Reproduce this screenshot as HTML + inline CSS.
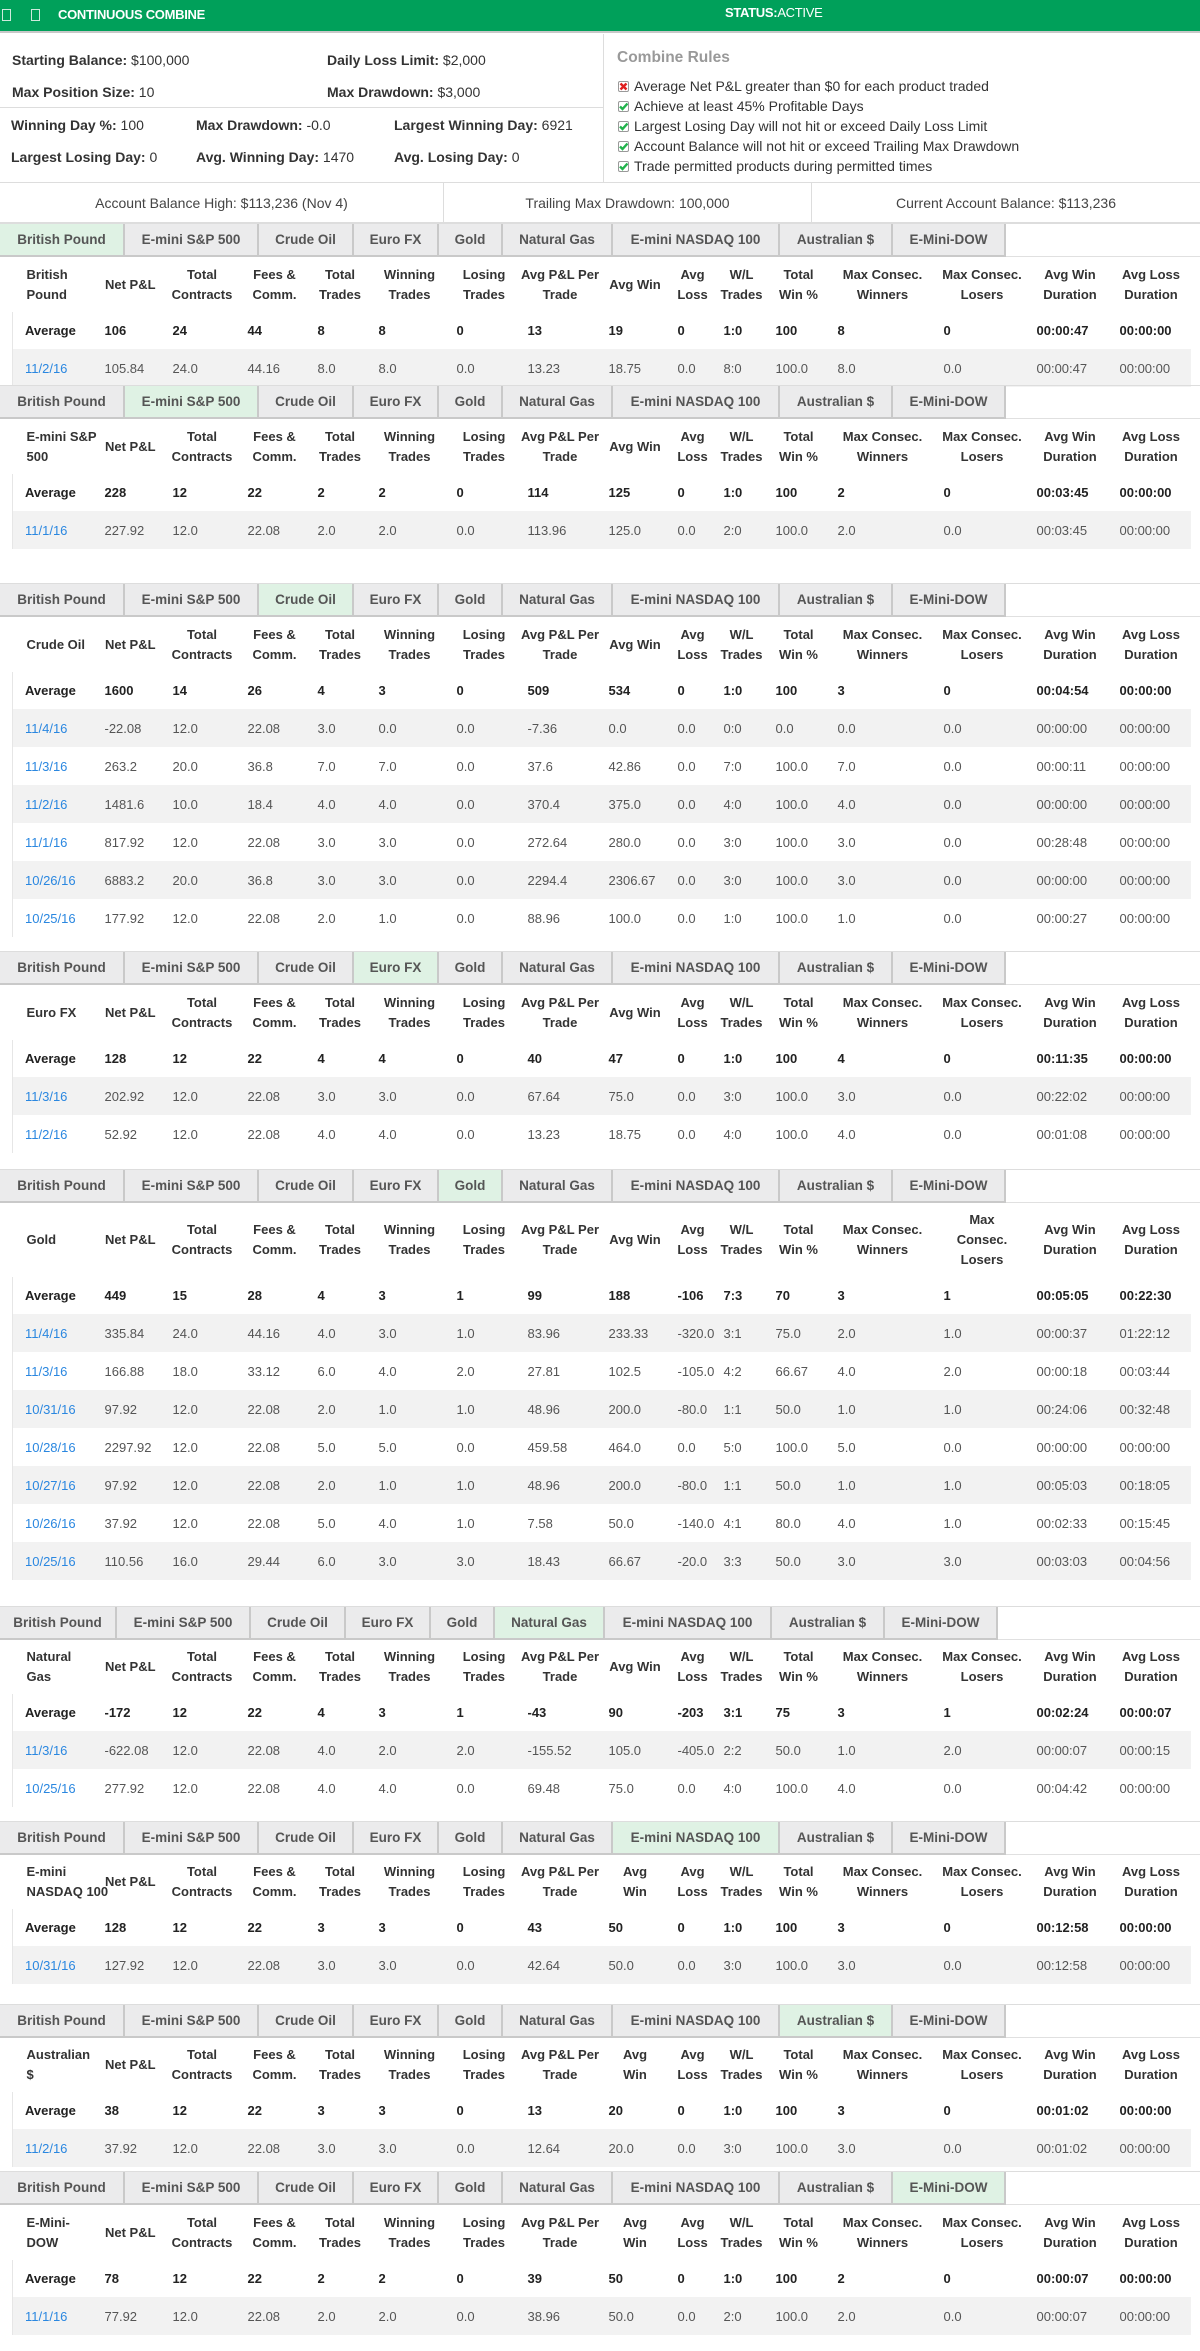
<!DOCTYPE html>
<html><head><meta charset="utf-8">
<style>
*{box-sizing:border-box;margin:0;padding:0}
body{width:1200px;height:2351px;position:relative;background:#fff;font-family:"Liberation Sans",Arial,sans-serif;color:#333;overflow:hidden}
.hdr{position:absolute;left:0;top:0;width:1200px;height:33px;background:#00a05a;border-bottom:2px solid #c8c8c8}
.hdr .ic{position:absolute;top:9px;width:9px;height:12px;border:1px solid #cfe9dc}
.hdr .t{position:absolute;top:7px;color:#fff;font-weight:bold;font-size:13px;letter-spacing:-0.3px}
.info{position:absolute;font-size:14px;color:#333}
.info b{color:#333}
.ln{position:absolute;height:1px;background:#ddd}
.rules{position:absolute;left:603px;top:34px;width:597px;height:148px;border-left:1px solid #ddd}
.rules h3{position:absolute;left:13px;top:15px;font-size:15.5px;color:#999;font-weight:bold}
.rule{position:absolute;left:14px;font-size:14px;color:#333;height:20px;line-height:20px;white-space:nowrap}
.cb{display:inline-block;width:11px;height:11px;border:1px solid #999;border-radius:2px;vertical-align:-1px;margin-right:5px;position:relative;background:#fff}
.bal{position:absolute;top:182px;height:41px;border-top:1px solid #ddd;border-bottom:1px solid #ddd;text-align:center;line-height:40px;font-size:14px;color:#444}
.sec{position:absolute;left:0;width:1200px}
.tabs{height:34px;display:flex;border-top:1px solid #ddd}
.tab{height:33px;background:#ebebec;border-right:2px solid #c9c9c9;border-bottom:2px solid #c9c9c9;font-weight:bold;font-size:13.5px;color:#555;text-align:center;line-height:31px;white-space:nowrap}
.tab.a{background:#dff2e4}
.tabs .rest{flex:1;border-bottom:1px solid #e0e0e0;height:33px}
table{border-collapse:collapse;margin-left:12px;width:1178px;table-layout:fixed}
th{font-size:13px;font-weight:bold;color:#333;text-align:center;line-height:20px;padding:0 1px;white-space:nowrap;vertical-align:middle}
th:first-child{text-align:left;padding-left:14px}
td{font-size:13px;padding-left:8px;white-space:nowrap;color:#555;height:38px}
tr.av td{font-weight:bold;color:#222;height:37px}
tr.g td{background:#f2f2f2}
td:first-child{border-left:1px solid #e6e6e6;padding-left:12px}
td a{color:#2a87e0;text-decoration:none}
</style></head><body>
<div class="hdr"><span class="ic" style="left:2px"></span><span class="ic" style="left:31px"></span><span class="t" style="left:58px">CONTINUOUS COMBINE</span><span class="t" style="left:725px;top:5px">STATUS:<span style="font-weight:normal">ACTIVE</span></span></div>

<div class="info" style="left:12px;top:52px"><b>Starting Balance:</b> $100,000</div>
<div class="info" style="left:327px;top:52px"><b>Daily Loss Limit:</b> $2,000</div>
<div class="info" style="left:12px;top:84px"><b>Max Position Size:</b> 10</div>
<div class="info" style="left:327px;top:84px"><b>Max Drawdown:</b> $3,000</div>
<div class="ln" style="left:0;top:107px;width:603px"></div>
<div class="info" style="left:11px;top:117px"><b>Winning Day %:</b> 100</div>
<div class="info" style="left:196px;top:117px"><b>Max Drawdown:</b> -0.0</div>
<div class="info" style="left:394px;top:117px"><b>Largest Winning Day:</b> 6921</div>
<div class="info" style="left:11px;top:149px"><b>Largest Losing Day:</b> 0</div>
<div class="info" style="left:196px;top:149px"><b>Avg. Winning Day:</b> 1470</div>
<div class="info" style="left:394px;top:149px"><b>Avg. Losing Day:</b> 0</div>

<div class="rules"><h3>Combine Rules</h3>
<div class="rule" style="top:42px"><span class="cb"><svg width="9" height="9" style="position:absolute;left:0;top:0"><path d="M1.5 1.5L7.5 7.5M7.5 1.5L1.5 7.5" stroke="#e02020" stroke-width="2.4"/></svg></span>Average Net P&amp;L greater than $0 for each product traded</div>
<div class="rule" style="top:62px"><span class="cb"><svg width="9" height="9" style="position:absolute;left:0;top:0"><path d="M1 4.5L3.5 7L8.5 1.5" stroke="#22b24c" stroke-width="2.4" fill="none"/></svg></span>Achieve at least 45% Profitable Days</div>
<div class="rule" style="top:82px"><span class="cb"><svg width="9" height="9" style="position:absolute;left:0;top:0"><path d="M1 4.5L3.5 7L8.5 1.5" stroke="#22b24c" stroke-width="2.4" fill="none"/></svg></span>Largest Losing Day will not hit or exceed Daily Loss Limit</div>
<div class="rule" style="top:102px"><span class="cb"><svg width="9" height="9" style="position:absolute;left:0;top:0"><path d="M1 4.5L3.5 7L8.5 1.5" stroke="#22b24c" stroke-width="2.4" fill="none"/></svg></span>Account Balance will not hit or exceed Trailing Max Drawdown</div>
<div class="rule" style="top:122px"><span class="cb"><svg width="9" height="9" style="position:absolute;left:0;top:0"><path d="M1 4.5L3.5 7L8.5 1.5" stroke="#22b24c" stroke-width="2.4" fill="none"/></svg></span>Trade permitted products during permitted times</div>
</div>

<div class="bal" style="left:0;width:443px">Account Balance High: $113,236 (Nov 4)</div>
<div class="bal" style="left:443px;width:368px;border-left:1px solid #ddd">Trailing Max Drawdown: 100,000</div>
<div class="bal" style="left:811px;width:389px;border-left:1px solid #ddd">Current Account Balance: $113,236</div>

<!-- SECTION 1 -->
<div class="sec" style="top:223px">
<div class="tabs"><div class="tab a" style="width:125px">British Pound</div><div class="tab" style="width:134px">E-mini S&amp;P 500</div><div class="tab" style="width:95px">Crude Oil</div><div class="tab" style="width:85px">Euro FX</div><div class="tab" style="width:64px">Gold</div><div class="tab" style="width:110px">Natural Gas</div><div class="tab" style="width:167px">E-mini NASDAQ 100</div><div class="tab" style="width:113px">Australian $</div><div class="tab" style="width:113px">E-Mini-DOW</div><div class="rest"></div></div>
<table><colgroup><col style="width:84px"><col style="width:68px"><col style="width:75px"><col style="width:70px"><col style="width:61px"><col style="width:78px"><col style="width:71px"><col style="width:81px"><col style="width:69px"><col style="width:46px"><col style="width:52px"><col style="width:62px"><col style="width:106px"><col style="width:93px"><col style="width:83px"><col style="width:79px"></colgroup>
<tr style="height:55px"><th>British<br>Pound</th><th>Net P&amp;L</th><th>Total<br>Contracts</th><th>Fees &amp;<br>Comm.</th><th>Total<br>Trades</th><th>Winning<br>Trades</th><th>Losing<br>Trades</th><th>Avg P&amp;L Per<br>Trade</th><th>Avg Win</th><th>Avg<br>Loss</th><th>W/L<br>Trades</th><th>Total<br>Win %</th><th>Max Consec.<br>Winners</th><th>Max Consec.<br>Losers</th><th>Avg Win<br>Duration</th><th>Avg Loss<br>Duration</th></tr>
<tr class="av"><td>Average</td><td>106</td><td>24</td><td>44</td><td>8</td><td>8</td><td>0</td><td>13</td><td>19</td><td>0</td><td>1:0</td><td>100</td><td>8</td><td>0</td><td>00:00:47</td><td>00:00:00</td></tr>
<tr class="g"><td><a>11/2/16</a></td><td>105.84</td><td>24.0</td><td>44.16</td><td>8.0</td><td>8.0</td><td>0.0</td><td>13.23</td><td>18.75</td><td>0.0</td><td>8:0</td><td>100.0</td><td>8.0</td><td>0.0</td><td>00:00:47</td><td>00:00:00</td></tr>
</table></div>

<!-- SECTION 2 -->
<div class="sec" style="top:385px">
<div class="tabs"><div class="tab" style="width:125px">British Pound</div><div class="tab a" style="width:134px">E-mini S&amp;P 500</div><div class="tab" style="width:95px">Crude Oil</div><div class="tab" style="width:85px">Euro FX</div><div class="tab" style="width:64px">Gold</div><div class="tab" style="width:110px">Natural Gas</div><div class="tab" style="width:167px">E-mini NASDAQ 100</div><div class="tab" style="width:113px">Australian $</div><div class="tab" style="width:113px">E-Mini-DOW</div><div class="rest"></div></div>
<table><colgroup><col style="width:84px"><col style="width:68px"><col style="width:75px"><col style="width:70px"><col style="width:61px"><col style="width:78px"><col style="width:71px"><col style="width:81px"><col style="width:69px"><col style="width:46px"><col style="width:52px"><col style="width:62px"><col style="width:106px"><col style="width:93px"><col style="width:83px"><col style="width:79px"></colgroup>
<tr style="height:55px"><th>E-mini S&amp;P<br>500</th><th>Net P&amp;L</th><th>Total<br>Contracts</th><th>Fees &amp;<br>Comm.</th><th>Total<br>Trades</th><th>Winning<br>Trades</th><th>Losing<br>Trades</th><th>Avg P&amp;L Per<br>Trade</th><th>Avg Win</th><th>Avg<br>Loss</th><th>W/L<br>Trades</th><th>Total<br>Win %</th><th>Max Consec.<br>Winners</th><th>Max Consec.<br>Losers</th><th>Avg Win<br>Duration</th><th>Avg Loss<br>Duration</th></tr>
<tr class="av"><td>Average</td><td>228</td><td>12</td><td>22</td><td>2</td><td>2</td><td>0</td><td>114</td><td>125</td><td>0</td><td>1:0</td><td>100</td><td>2</td><td>0</td><td>00:03:45</td><td>00:00:00</td></tr>
<tr class="g"><td><a>11/1/16</a></td><td>227.92</td><td>12.0</td><td>22.08</td><td>2.0</td><td>2.0</td><td>0.0</td><td>113.96</td><td>125.0</td><td>0.0</td><td>2:0</td><td>100.0</td><td>2.0</td><td>0.0</td><td>00:03:45</td><td>00:00:00</td></tr>
</table></div>

<!-- SECTION 3 -->
<div class="sec" style="top:583px">
<div class="tabs"><div class="tab" style="width:125px">British Pound</div><div class="tab" style="width:134px">E-mini S&amp;P 500</div><div class="tab a" style="width:95px">Crude Oil</div><div class="tab" style="width:85px">Euro FX</div><div class="tab" style="width:64px">Gold</div><div class="tab" style="width:110px">Natural Gas</div><div class="tab" style="width:167px">E-mini NASDAQ 100</div><div class="tab" style="width:113px">Australian $</div><div class="tab" style="width:113px">E-Mini-DOW</div><div class="rest"></div></div>
<table><colgroup><col style="width:84px"><col style="width:68px"><col style="width:75px"><col style="width:70px"><col style="width:61px"><col style="width:78px"><col style="width:71px"><col style="width:81px"><col style="width:69px"><col style="width:46px"><col style="width:52px"><col style="width:62px"><col style="width:106px"><col style="width:93px"><col style="width:83px"><col style="width:79px"></colgroup>
<tr style="height:55px"><th>Crude Oil</th><th>Net P&amp;L</th><th>Total<br>Contracts</th><th>Fees &amp;<br>Comm.</th><th>Total<br>Trades</th><th>Winning<br>Trades</th><th>Losing<br>Trades</th><th>Avg P&amp;L Per<br>Trade</th><th>Avg Win</th><th>Avg<br>Loss</th><th>W/L<br>Trades</th><th>Total<br>Win %</th><th>Max Consec.<br>Winners</th><th>Max Consec.<br>Losers</th><th>Avg Win<br>Duration</th><th>Avg Loss<br>Duration</th></tr>
<tr class="av"><td>Average</td><td>1600</td><td>14</td><td>26</td><td>4</td><td>3</td><td>0</td><td>509</td><td>534</td><td>0</td><td>1:0</td><td>100</td><td>3</td><td>0</td><td>00:04:54</td><td>00:00:00</td></tr>
<tr class="g"><td><a>11/4/16</a></td><td>-22.08</td><td>12.0</td><td>22.08</td><td>3.0</td><td>0.0</td><td>0.0</td><td>-7.36</td><td>0.0</td><td>0.0</td><td>0:0</td><td>0.0</td><td>0.0</td><td>0.0</td><td>00:00:00</td><td>00:00:00</td></tr>
<tr><td><a>11/3/16</a></td><td>263.2</td><td>20.0</td><td>36.8</td><td>7.0</td><td>7.0</td><td>0.0</td><td>37.6</td><td>42.86</td><td>0.0</td><td>7:0</td><td>100.0</td><td>7.0</td><td>0.0</td><td>00:00:11</td><td>00:00:00</td></tr>
<tr class="g"><td><a>11/2/16</a></td><td>1481.6</td><td>10.0</td><td>18.4</td><td>4.0</td><td>4.0</td><td>0.0</td><td>370.4</td><td>375.0</td><td>0.0</td><td>4:0</td><td>100.0</td><td>4.0</td><td>0.0</td><td>00:00:00</td><td>00:00:00</td></tr>
<tr><td><a>11/1/16</a></td><td>817.92</td><td>12.0</td><td>22.08</td><td>3.0</td><td>3.0</td><td>0.0</td><td>272.64</td><td>280.0</td><td>0.0</td><td>3:0</td><td>100.0</td><td>3.0</td><td>0.0</td><td>00:28:48</td><td>00:00:00</td></tr>
<tr class="g"><td><a>10/26/16</a></td><td>6883.2</td><td>20.0</td><td>36.8</td><td>3.0</td><td>3.0</td><td>0.0</td><td>2294.4</td><td>2306.67</td><td>0.0</td><td>3:0</td><td>100.0</td><td>3.0</td><td>0.0</td><td>00:00:00</td><td>00:00:00</td></tr>
<tr><td><a>10/25/16</a></td><td>177.92</td><td>12.0</td><td>22.08</td><td>2.0</td><td>1.0</td><td>0.0</td><td>88.96</td><td>100.0</td><td>0.0</td><td>1:0</td><td>100.0</td><td>1.0</td><td>0.0</td><td>00:00:27</td><td>00:00:00</td></tr>
</table></div>

<!-- SECTION 4 -->
<div class="sec" style="top:951px">
<div class="tabs"><div class="tab" style="width:125px">British Pound</div><div class="tab" style="width:134px">E-mini S&amp;P 500</div><div class="tab" style="width:95px">Crude Oil</div><div class="tab a" style="width:85px">Euro FX</div><div class="tab" style="width:64px">Gold</div><div class="tab" style="width:110px">Natural Gas</div><div class="tab" style="width:167px">E-mini NASDAQ 100</div><div class="tab" style="width:113px">Australian $</div><div class="tab" style="width:113px">E-Mini-DOW</div><div class="rest"></div></div>
<table><colgroup><col style="width:84px"><col style="width:68px"><col style="width:75px"><col style="width:70px"><col style="width:61px"><col style="width:78px"><col style="width:71px"><col style="width:81px"><col style="width:69px"><col style="width:46px"><col style="width:52px"><col style="width:62px"><col style="width:106px"><col style="width:93px"><col style="width:83px"><col style="width:79px"></colgroup>
<tr style="height:55px"><th>Euro FX</th><th>Net P&amp;L</th><th>Total<br>Contracts</th><th>Fees &amp;<br>Comm.</th><th>Total<br>Trades</th><th>Winning<br>Trades</th><th>Losing<br>Trades</th><th>Avg P&amp;L Per<br>Trade</th><th>Avg Win</th><th>Avg<br>Loss</th><th>W/L<br>Trades</th><th>Total<br>Win %</th><th>Max Consec.<br>Winners</th><th>Max Consec.<br>Losers</th><th>Avg Win<br>Duration</th><th>Avg Loss<br>Duration</th></tr>
<tr class="av"><td>Average</td><td>128</td><td>12</td><td>22</td><td>4</td><td>4</td><td>0</td><td>40</td><td>47</td><td>0</td><td>1:0</td><td>100</td><td>4</td><td>0</td><td>00:11:35</td><td>00:00:00</td></tr>
<tr class="g"><td><a>11/3/16</a></td><td>202.92</td><td>12.0</td><td>22.08</td><td>3.0</td><td>3.0</td><td>0.0</td><td>67.64</td><td>75.0</td><td>0.0</td><td>3:0</td><td>100.0</td><td>3.0</td><td>0.0</td><td>00:22:02</td><td>00:00:00</td></tr>
<tr><td><a>11/2/16</a></td><td>52.92</td><td>12.0</td><td>22.08</td><td>4.0</td><td>4.0</td><td>0.0</td><td>13.23</td><td>18.75</td><td>0.0</td><td>4:0</td><td>100.0</td><td>4.0</td><td>0.0</td><td>00:01:08</td><td>00:00:00</td></tr>
</table></div>

<!-- SECTION 5 -->
<div class="sec" style="top:1169px">
<div class="tabs"><div class="tab" style="width:125px">British Pound</div><div class="tab" style="width:134px">E-mini S&amp;P 500</div><div class="tab" style="width:95px">Crude Oil</div><div class="tab" style="width:85px">Euro FX</div><div class="tab a" style="width:64px">Gold</div><div class="tab" style="width:110px">Natural Gas</div><div class="tab" style="width:167px">E-mini NASDAQ 100</div><div class="tab" style="width:113px">Australian $</div><div class="tab" style="width:113px">E-Mini-DOW</div><div class="rest"></div></div>
<table><colgroup><col style="width:84px"><col style="width:68px"><col style="width:75px"><col style="width:70px"><col style="width:61px"><col style="width:78px"><col style="width:71px"><col style="width:81px"><col style="width:69px"><col style="width:46px"><col style="width:52px"><col style="width:62px"><col style="width:106px"><col style="width:93px"><col style="width:83px"><col style="width:79px"></colgroup>
<tr style="height:74px"><th>Gold</th><th>Net P&amp;L</th><th>Total<br>Contracts</th><th>Fees &amp;<br>Comm.</th><th>Total<br>Trades</th><th>Winning<br>Trades</th><th>Losing<br>Trades</th><th>Avg P&amp;L Per<br>Trade</th><th>Avg Win</th><th>Avg<br>Loss</th><th>W/L<br>Trades</th><th>Total<br>Win %</th><th>Max Consec.<br>Winners</th><th>Max<br>Consec.<br>Losers</th><th>Avg Win<br>Duration</th><th>Avg Loss<br>Duration</th></tr>
<tr class="av"><td>Average</td><td>449</td><td>15</td><td>28</td><td>4</td><td>3</td><td>1</td><td>99</td><td>188</td><td>-106</td><td>7:3</td><td>70</td><td>3</td><td>1</td><td>00:05:05</td><td>00:22:30</td></tr>
<tr class="g"><td><a>11/4/16</a></td><td>335.84</td><td>24.0</td><td>44.16</td><td>4.0</td><td>3.0</td><td>1.0</td><td>83.96</td><td>233.33</td><td>-320.0</td><td>3:1</td><td>75.0</td><td>2.0</td><td>1.0</td><td>00:00:37</td><td>01:22:12</td></tr>
<tr><td><a>11/3/16</a></td><td>166.88</td><td>18.0</td><td>33.12</td><td>6.0</td><td>4.0</td><td>2.0</td><td>27.81</td><td>102.5</td><td>-105.0</td><td>4:2</td><td>66.67</td><td>4.0</td><td>2.0</td><td>00:00:18</td><td>00:03:44</td></tr>
<tr class="g"><td><a>10/31/16</a></td><td>97.92</td><td>12.0</td><td>22.08</td><td>2.0</td><td>1.0</td><td>1.0</td><td>48.96</td><td>200.0</td><td>-80.0</td><td>1:1</td><td>50.0</td><td>1.0</td><td>1.0</td><td>00:24:06</td><td>00:32:48</td></tr>
<tr><td><a>10/28/16</a></td><td>2297.92</td><td>12.0</td><td>22.08</td><td>5.0</td><td>5.0</td><td>0.0</td><td>459.58</td><td>464.0</td><td>0.0</td><td>5:0</td><td>100.0</td><td>5.0</td><td>0.0</td><td>00:00:00</td><td>00:00:00</td></tr>
<tr class="g"><td><a>10/27/16</a></td><td>97.92</td><td>12.0</td><td>22.08</td><td>2.0</td><td>1.0</td><td>1.0</td><td>48.96</td><td>200.0</td><td>-80.0</td><td>1:1</td><td>50.0</td><td>1.0</td><td>1.0</td><td>00:05:03</td><td>00:18:05</td></tr>
<tr><td><a>10/26/16</a></td><td>37.92</td><td>12.0</td><td>22.08</td><td>5.0</td><td>4.0</td><td>1.0</td><td>7.58</td><td>50.0</td><td>-140.0</td><td>4:1</td><td>80.0</td><td>4.0</td><td>1.0</td><td>00:02:33</td><td>00:15:45</td></tr>
<tr class="g"><td><a>10/25/16</a></td><td>110.56</td><td>16.0</td><td>29.44</td><td>6.0</td><td>3.0</td><td>3.0</td><td>18.43</td><td>66.67</td><td>-20.0</td><td>3:3</td><td>50.0</td><td>3.0</td><td>3.0</td><td>00:03:03</td><td>00:04:56</td></tr>
</table></div>

<!-- SECTION 6 -->
<div class="sec" style="top:1606px">
<div class="tabs"><div class="tab" style="width:117px">British Pound</div><div class="tab" style="width:134px">E-mini S&amp;P 500</div><div class="tab" style="width:95px">Crude Oil</div><div class="tab" style="width:85px">Euro FX</div><div class="tab" style="width:64px">Gold</div><div class="tab a" style="width:110px">Natural Gas</div><div class="tab" style="width:167px">E-mini NASDAQ 100</div><div class="tab" style="width:113px">Australian $</div><div class="tab" style="width:113px">E-Mini-DOW</div><div class="rest"></div></div>
<table><colgroup><col style="width:84px"><col style="width:68px"><col style="width:75px"><col style="width:70px"><col style="width:61px"><col style="width:78px"><col style="width:71px"><col style="width:81px"><col style="width:69px"><col style="width:46px"><col style="width:52px"><col style="width:62px"><col style="width:106px"><col style="width:93px"><col style="width:83px"><col style="width:79px"></colgroup>
<tr style="height:54px"><th>Natural<br>Gas</th><th>Net P&amp;L</th><th>Total<br>Contracts</th><th>Fees &amp;<br>Comm.</th><th>Total<br>Trades</th><th>Winning<br>Trades</th><th>Losing<br>Trades</th><th>Avg P&amp;L Per<br>Trade</th><th>Avg Win</th><th>Avg<br>Loss</th><th>W/L<br>Trades</th><th>Total<br>Win %</th><th>Max Consec.<br>Winners</th><th>Max Consec.<br>Losers</th><th>Avg Win<br>Duration</th><th>Avg Loss<br>Duration</th></tr>
<tr class="av"><td>Average</td><td>-172</td><td>12</td><td>22</td><td>4</td><td>3</td><td>1</td><td>-43</td><td>90</td><td>-203</td><td>3:1</td><td>75</td><td>3</td><td>1</td><td>00:02:24</td><td>00:00:07</td></tr>
<tr class="g"><td><a>11/3/16</a></td><td>-622.08</td><td>12.0</td><td>22.08</td><td>4.0</td><td>2.0</td><td>2.0</td><td>-155.52</td><td>105.0</td><td>-405.0</td><td>2:2</td><td>50.0</td><td>1.0</td><td>2.0</td><td>00:00:07</td><td>00:00:15</td></tr>
<tr><td><a>10/25/16</a></td><td>277.92</td><td>12.0</td><td>22.08</td><td>4.0</td><td>4.0</td><td>0.0</td><td>69.48</td><td>75.0</td><td>0.0</td><td>4:0</td><td>100.0</td><td>4.0</td><td>0.0</td><td>00:04:42</td><td>00:00:00</td></tr>
</table></div>

<!-- SECTION 7 -->
<div class="sec" style="top:1821px">
<div class="tabs"><div class="tab" style="width:125px">British Pound</div><div class="tab" style="width:134px">E-mini S&amp;P 500</div><div class="tab" style="width:95px">Crude Oil</div><div class="tab" style="width:85px">Euro FX</div><div class="tab" style="width:64px">Gold</div><div class="tab" style="width:110px">Natural Gas</div><div class="tab a" style="width:167px">E-mini NASDAQ 100</div><div class="tab" style="width:113px">Australian $</div><div class="tab" style="width:113px">E-Mini-DOW</div><div class="rest"></div></div>
<table><colgroup><col style="width:84px"><col style="width:68px"><col style="width:75px"><col style="width:70px"><col style="width:61px"><col style="width:78px"><col style="width:71px"><col style="width:81px"><col style="width:69px"><col style="width:46px"><col style="width:52px"><col style="width:62px"><col style="width:106px"><col style="width:93px"><col style="width:83px"><col style="width:79px"></colgroup>
<tr style="height:54px"><th>E-mini<br>NASDAQ 100</th><th>Net P&amp;L</th><th>Total<br>Contracts</th><th>Fees &amp;<br>Comm.</th><th>Total<br>Trades</th><th>Winning<br>Trades</th><th>Losing<br>Trades</th><th>Avg P&amp;L Per<br>Trade</th><th>Avg<br>Win</th><th>Avg<br>Loss</th><th>W/L<br>Trades</th><th>Total<br>Win %</th><th>Max Consec.<br>Winners</th><th>Max Consec.<br>Losers</th><th>Avg Win<br>Duration</th><th>Avg Loss<br>Duration</th></tr>
<tr class="av"><td>Average</td><td>128</td><td>12</td><td>22</td><td>3</td><td>3</td><td>0</td><td>43</td><td>50</td><td>0</td><td>1:0</td><td>100</td><td>3</td><td>0</td><td>00:12:58</td><td>00:00:00</td></tr>
<tr class="g"><td><a>10/31/16</a></td><td>127.92</td><td>12.0</td><td>22.08</td><td>3.0</td><td>3.0</td><td>0.0</td><td>42.64</td><td>50.0</td><td>0.0</td><td>3:0</td><td>100.0</td><td>3.0</td><td>0.0</td><td>00:12:58</td><td>00:00:00</td></tr>
</table></div>

<!-- SECTION 8 -->
<div class="sec" style="top:2004px">
<div class="tabs"><div class="tab" style="width:125px">British Pound</div><div class="tab" style="width:134px">E-mini S&amp;P 500</div><div class="tab" style="width:95px">Crude Oil</div><div class="tab" style="width:85px">Euro FX</div><div class="tab" style="width:64px">Gold</div><div class="tab" style="width:110px">Natural Gas</div><div class="tab" style="width:167px">E-mini NASDAQ 100</div><div class="tab a" style="width:113px">Australian $</div><div class="tab" style="width:113px">E-Mini-DOW</div><div class="rest"></div></div>
<table><colgroup><col style="width:84px"><col style="width:68px"><col style="width:75px"><col style="width:70px"><col style="width:61px"><col style="width:78px"><col style="width:71px"><col style="width:81px"><col style="width:69px"><col style="width:46px"><col style="width:52px"><col style="width:62px"><col style="width:106px"><col style="width:93px"><col style="width:83px"><col style="width:79px"></colgroup>
<tr style="height:54px"><th>Australian<br>$</th><th>Net P&amp;L</th><th>Total<br>Contracts</th><th>Fees &amp;<br>Comm.</th><th>Total<br>Trades</th><th>Winning<br>Trades</th><th>Losing<br>Trades</th><th>Avg P&amp;L Per<br>Trade</th><th>Avg<br>Win</th><th>Avg<br>Loss</th><th>W/L<br>Trades</th><th>Total<br>Win %</th><th>Max Consec.<br>Winners</th><th>Max Consec.<br>Losers</th><th>Avg Win<br>Duration</th><th>Avg Loss<br>Duration</th></tr>
<tr class="av"><td>Average</td><td>38</td><td>12</td><td>22</td><td>3</td><td>3</td><td>0</td><td>13</td><td>20</td><td>0</td><td>1:0</td><td>100</td><td>3</td><td>0</td><td>00:01:02</td><td>00:00:00</td></tr>
<tr class="g"><td><a>11/2/16</a></td><td>37.92</td><td>12.0</td><td>22.08</td><td>3.0</td><td>3.0</td><td>0.0</td><td>12.64</td><td>20.0</td><td>0.0</td><td>3:0</td><td>100.0</td><td>3.0</td><td>0.0</td><td>00:01:02</td><td>00:00:00</td></tr>
</table></div>

<!-- SECTION 9 -->
<div class="sec" style="top:2171px">
<div class="tabs"><div class="tab" style="width:125px">British Pound</div><div class="tab" style="width:134px">E-mini S&amp;P 500</div><div class="tab" style="width:95px">Crude Oil</div><div class="tab" style="width:85px">Euro FX</div><div class="tab" style="width:64px">Gold</div><div class="tab" style="width:110px">Natural Gas</div><div class="tab" style="width:167px">E-mini NASDAQ 100</div><div class="tab" style="width:113px">Australian $</div><div class="tab a" style="width:113px">E-Mini-DOW</div><div class="rest"></div></div>
<table><colgroup><col style="width:84px"><col style="width:68px"><col style="width:75px"><col style="width:70px"><col style="width:61px"><col style="width:78px"><col style="width:71px"><col style="width:81px"><col style="width:69px"><col style="width:46px"><col style="width:52px"><col style="width:62px"><col style="width:106px"><col style="width:93px"><col style="width:83px"><col style="width:79px"></colgroup>
<tr style="height:55px"><th>E-Mini-<br>DOW</th><th>Net P&amp;L</th><th>Total<br>Contracts</th><th>Fees &amp;<br>Comm.</th><th>Total<br>Trades</th><th>Winning<br>Trades</th><th>Losing<br>Trades</th><th>Avg P&amp;L Per<br>Trade</th><th>Avg<br>Win</th><th>Avg<br>Loss</th><th>W/L<br>Trades</th><th>Total<br>Win %</th><th>Max Consec.<br>Winners</th><th>Max Consec.<br>Losers</th><th>Avg Win<br>Duration</th><th>Avg Loss<br>Duration</th></tr>
<tr class="av"><td>Average</td><td>78</td><td>12</td><td>22</td><td>2</td><td>2</td><td>0</td><td>39</td><td>50</td><td>0</td><td>1:0</td><td>100</td><td>2</td><td>0</td><td>00:00:07</td><td>00:00:00</td></tr>
<tr class="g"><td><a>11/1/16</a></td><td>77.92</td><td>12.0</td><td>22.08</td><td>2.0</td><td>2.0</td><td>0.0</td><td>38.96</td><td>50.0</td><td>0.0</td><td>2:0</td><td>100.0</td><td>2.0</td><td>0.0</td><td>00:00:07</td><td>00:00:00</td></tr>
</table></div>
</body></html>
